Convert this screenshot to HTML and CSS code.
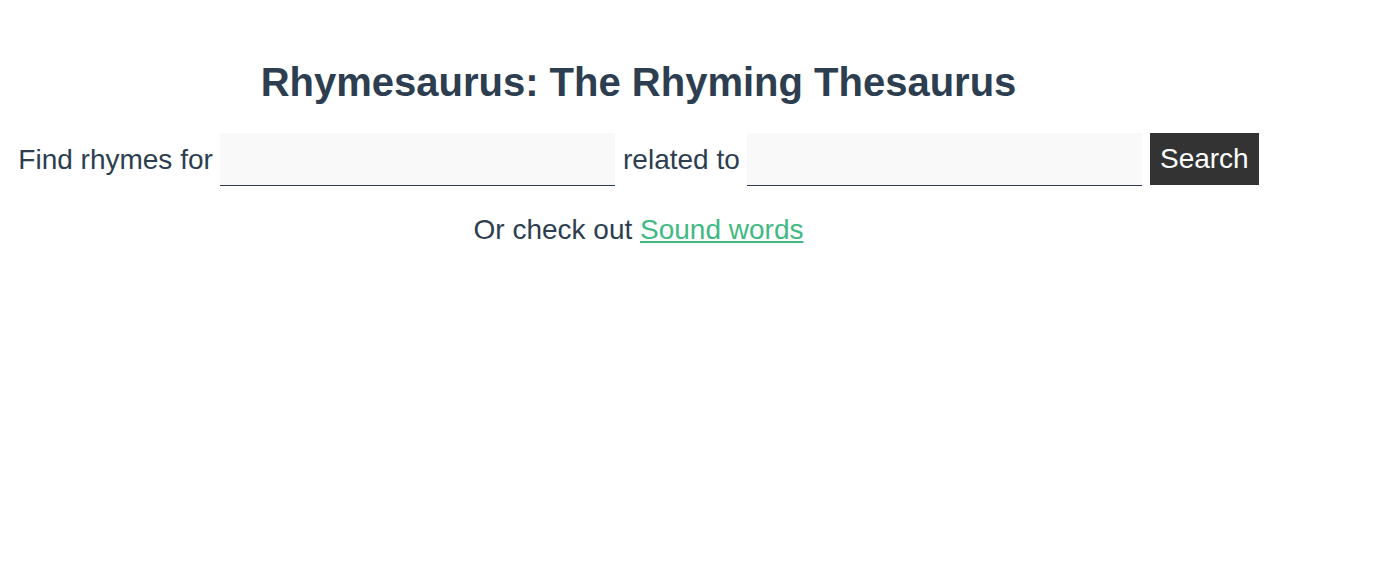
FILE: index.html
```html
<!DOCTYPE html>
<html>
<head>
<meta charset="utf-8">
<link rel="stylesheet" href="styles.css">
</head>
<body>
<div class="app">
  <h1 class="title">Rhymesaurus: The Rhyming Thesaurus</h1>
  <form class="search">
    <label class="label">Find rhymes for</label>
    <input class="field" type="text">
    <label class="label">related to</label>
    <input class="field" type="text">
    <button class="btn" type="button">Search</button>
  </form>
  <p class="alt">Or check out <a class="link" href="#">Sound words</a></p>
</div>
</body>
</html>
```
FILE: styles.css
```css
html, body {
  background: #ffffff;
}
body {
  margin: 8px;
  font-family: "Liberation Sans", Arial, sans-serif;
  color: #2c3e50;
}
.app {
  width: 1261px;
  text-align: center;
  padding-top: 51px;
}
.title {
  margin: 0;
  font-size: 40px;
  font-weight: bold;
  line-height: 46px;
  color: #2c3e50;
}
.search {
  margin-top: 28px;
  display: flex;
  align-items: center;
  justify-content: center;
  gap: 7.6px;
  font-size: 28px;
}
.label {
  color: #2c3e50;
}
.field {
  box-sizing: border-box;
  width: 395px;
  height: 53px;
  margin: 0;
  border: none;
  border-bottom: 1px solid #2c3e50;
  background: #f9f9f9;
  font-family: inherit;
  font-size: 28px;
  padding: 0 8px;
  outline: none;
}
.btn {
  box-sizing: border-box;
  height: 52px;
  margin: 0;
  margin-top: -1px;
  padding: 0 10px;
  border: none;
  background: #333333;
  color: #ffffff;
  font-family: inherit;
  font-size: 28px;
}
.alt {
  margin: 28px 0 0;
  font-size: 28px;
  line-height: 32px;
}
.link {
  color: #42b983;
}
```
